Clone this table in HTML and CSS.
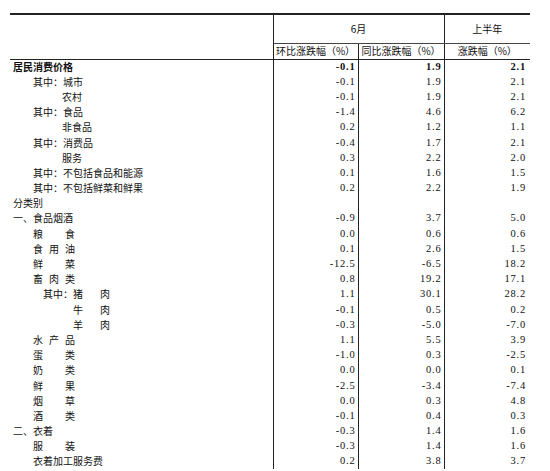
FILE: index.html
```html
<!DOCTYPE html>
<html lang="zh-CN">
<head>
<meta charset="utf-8">
<title>居民消费价格</title>
<link rel="stylesheet" href="styles.css">
</head>
<body>
<table class="cpi">
  <colgroup>
    <col class="c-label"><col class="c-num"><col class="c-num2"><col class="c-num3">
  </colgroup>
  <thead>
    <tr class="h1">
      <th rowspan="2" class="corner"></th>
      <th colspan="2" class="grp">6月</th>
      <th class="grp last">上半年</th>
    </tr>
    <tr class="h2">
      <th class="sub">环比涨跌幅（%）</th>
      <th class="sub">同比涨跌幅（%）</th>
      <th class="sub last">涨跌幅（%）</th>
    </tr>
  </thead>
  <tbody>
    <tr class="bold"><td class="lb">居民消费价格</td><td>-0.1</td><td>1.9</td><td>2.1</td></tr>
    <tr><td class="lb i1">其中：城市</td><td>-0.1</td><td>1.9</td><td>2.1</td></tr>
    <tr><td class="lb i2">农村</td><td>-0.1</td><td>1.9</td><td>2.1</td></tr>
    <tr><td class="lb i1">其中：食品</td><td>-1.4</td><td>4.6</td><td>6.2</td></tr>
    <tr><td class="lb i2">非食品</td><td>0.2</td><td>1.2</td><td>1.1</td></tr>
    <tr><td class="lb i1">其中：消费品</td><td>-0.4</td><td>1.7</td><td>2.1</td></tr>
    <tr><td class="lb i2">服务</td><td>0.3</td><td>2.2</td><td>2.0</td></tr>
    <tr><td class="lb i1">其中：不包括食品和能源</td><td>0.1</td><td>1.6</td><td>1.5</td></tr>
    <tr><td class="lb i1">其中：不包括鲜菜和鲜果</td><td>0.2</td><td>2.2</td><td>1.9</td></tr>
    <tr><td class="lb">分类别</td><td></td><td></td><td></td></tr>
    <tr><td class="lb">一、食品烟酒</td><td>-0.9</td><td>3.7</td><td>5.0</td></tr>
    <tr><td class="lb i1"><span class="sp"><span>粮</span><span>食</span></span></td><td>0.0</td><td>0.6</td><td>0.6</td></tr>
    <tr><td class="lb i1"><span class="sp"><span>食</span><span>用</span><span>油</span></span></td><td>0.1</td><td>2.6</td><td>1.5</td></tr>
    <tr><td class="lb i1"><span class="sp"><span>鲜</span><span>菜</span></span></td><td>-12.5</td><td>-6.5</td><td>18.2</td></tr>
    <tr><td class="lb i1"><span class="sp"><span>畜</span><span>肉</span><span>类</span></span></td><td>0.8</td><td>19.2</td><td>17.1</td></tr>
    <tr><td class="lb i3">其中：<span class="sp2"><span>猪</span><span>肉</span></span></td><td>1.1</td><td>30.1</td><td>28.2</td></tr>
    <tr><td class="lb i4"><span class="sp2"><span>牛</span><span>肉</span></span></td><td>-0.1</td><td>0.5</td><td>0.2</td></tr>
    <tr><td class="lb i4"><span class="sp2"><span>羊</span><span>肉</span></span></td><td>-0.3</td><td>-5.0</td><td>-7.0</td></tr>
    <tr><td class="lb i1"><span class="sp"><span>水</span><span>产</span><span>品</span></span></td><td>1.1</td><td>5.5</td><td>3.9</td></tr>
    <tr><td class="lb i1"><span class="sp"><span>蛋</span><span>类</span></span></td><td>-1.0</td><td>0.3</td><td>-2.5</td></tr>
    <tr><td class="lb i1"><span class="sp"><span>奶</span><span>类</span></span></td><td>0.0</td><td>0.0</td><td>0.1</td></tr>
    <tr><td class="lb i1"><span class="sp"><span>鲜</span><span>果</span></span></td><td>-2.5</td><td>-3.4</td><td>-7.4</td></tr>
    <tr><td class="lb i1"><span class="sp"><span>烟</span><span>草</span></span></td><td>0.0</td><td>0.3</td><td>4.8</td></tr>
    <tr><td class="lb i1"><span class="sp"><span>酒</span><span>类</span></span></td><td>-0.1</td><td>0.4</td><td>0.3</td></tr>
    <tr><td class="lb">二、衣着</td><td>-0.3</td><td>1.4</td><td>1.6</td></tr>
    <tr><td class="lb i1"><span class="sp"><span>服</span><span>装</span></span></td><td>-0.3</td><td>1.4</td><td>1.6</td></tr>
    <tr><td class="lb i1">衣着加工服务费</td><td>0.2</td><td>3.8</td><td>3.7</td></tr>
  </tbody>
</table>
</body>
</html>
```

FILE: styles.css
```css
html, body {
  margin: 0;
  padding: 0;
  background: #fff;
}

body {
  color: #111;
  font-family: "Noto Sans CJK SC", "Noto Sans", sans-serif;
  font-size: 10px;
}

.cpi {
  margin: 13px 0 0 10px;
  width: 520px;
  border-collapse: collapse;
  table-layout: fixed;
}

.c-label { width: 263px; }
.c-num { width: 85px; }
.c-num2 { width: 86px; }
.c-num3 { width: 86px; }

.cpi thead tr.h1 th {
  border-top: 2px solid #222;
}

.cpi th {
  font-weight: normal;
  padding: 0;
  text-align: center;
  line-height: 14px;
}

.h1 { height: 29px; }
.h2 { height: 16px; }

.corner {
  border-right: 1px solid #222;
  border-bottom: 1px solid #222;
}

.grp {
  border-bottom: 1px solid #444;
  border-right: 1px solid #222;
}

.sub {
  border-bottom: 1px solid #222;
  border-right: 1px solid #222;
}

.last { border-right: none !important; }

.cpi tbody tr { height: 15.2px; }

.cpi td {
  padding: 0 2px 0 0;
  line-height: 14px;
  text-align: right;
  white-space: nowrap;
  font-family: "Liberation Serif", "Times New Roman", serif;
  font-size: 10.5px;
  letter-spacing: 0.8px;
  border-right: 1px solid #222;
}

.cpi td:last-child {
  border-right: none;
  padding-right: 4px;
}

.cpi td.lb {
  text-align: left;
  padding-left: 3px;
  letter-spacing: 0;
  font-family: "Noto Sans CJK SC", "Noto Sans", sans-serif;
  font-size: 10px;
}

.cpi td.i1 { padding-left: 23px; }
.cpi td.i2 { padding-left: 52px; }
.cpi td.i3 { padding-left: 33px; }
.cpi td.i4 { padding-left: 63px; }

.bold td { font-weight: bold; }

.sp {
  display: inline-flex;
  justify-content: space-between;
  width: 42px;
  vertical-align: top;
}

.sp2 {
  display: inline-flex;
  justify-content: space-between;
  width: 37px;
  vertical-align: top;
}
```
